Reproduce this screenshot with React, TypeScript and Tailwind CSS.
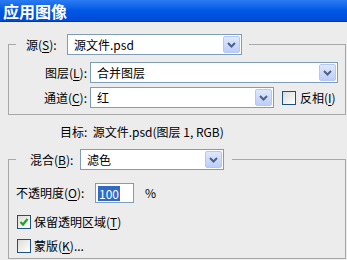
import React from 'react';

const U = ({ c }: { c: string }) => <span className="underline underline-offset-2">{c}</span>;

function Select({ value, className }: { value: string; className: string }) {
    return (
        <div className={`flex h-[21px] items-center border border-[#7f9db9] bg-white ${className}`}>
            <span className="flex-1 pl-[6px] leading-none">{value}</span>
            <div className="mr-[1px] flex h-[17px] w-[17px] items-center justify-center rounded-[2px] border border-[#b4c8f4] bg-gradient-to-b from-[#dfe8fd] to-[#bccdf7]">
                <svg width="9" height="6" viewBox="0 0 9 6">
                    <path d="M1 1 L4.5 4.5 L8 1" fill="none" stroke="#4d6185" strokeWidth="2" />
                </svg>
            </div>
        </div>
    );
}

function Check({ checked }: { checked?: boolean }) {
    return (
        <div className="flex h-[14px] w-[14px] items-center justify-center border border-[#1c5180] bg-gradient-to-br from-[#dcdcd7] to-white">
            {checked && (
                <svg width="10" height="10" viewBox="0 0 10 10">
                    <path d="M1.5 5 L4 7.5 L8.5 2" fill="none" stroke="#21a121" strokeWidth="2.2" />
                </svg>
            )}
        </div>
    );
}

export default function App() {
    return (
        <div className="relative h-[260px] w-[347px] overflow-hidden bg-[#ececec] font-['Noto_Sans_CJK_SC',sans-serif] text-[12px] text-black">
            {/* Title bar */}
            <div className="flex h-[22px] items-center border-b border-[#0036b8] bg-gradient-to-b from-[#2b7bf2] via-[#0058e6] to-[#004ad6] pl-[3px] text-[16px] font-bold leading-none text-white">
                应用图像
            </div>

            {/* Source group */}
            <fieldset className="ml-[8px] mt-[12px] h-[81px] w-[338px] border border-[#a8a8a8]">
                <legend className="ml-[7px] flex items-center pl-[10px] pr-[7px]">
                    <span className="w-[41px]">源(<U c="S" />):</span>
                    <Select value="源文件.psd" className="w-[175px]" />
                </legend>
                <div className="mt-[7px] flex items-center">
                    <span className="mr-[3px] w-[78px] text-right">图层(<U c="L" />):</span>
                    <Select value="合并图层" className="w-[248px]" />
                </div>
                <div className="mt-[4px] flex items-center">
                    <span className="mr-[3px] w-[78px] text-right">通道(<U c="C" />):</span>
                    <Select value="红" className="w-[184px]" />
                    <div className="ml-[8px] mr-[4px]">
                        <Check />
                    </div>
                    <span>反相(<U c="I" />)</span>
                </div>
            </fieldset>

            <div className="flex h-[34px] items-center pl-[60px]">目标:&nbsp;&nbsp;源文件.psd(图层 1, RGB)</div>

            {/* Blend group */}
            <fieldset className="ml-[8px] h-[110px] w-[338px] border border-[#a8a8a8]">
                <legend className="ml-[7px] flex items-center pl-[14px] pr-[8px]">
                    <span className="w-[50px]">混合(<U c="B" />):</span>
                    <Select value="滤色" className="w-[144px]" />
                </legend>
                <div className="mt-[13px] flex items-center pl-[7px]">
                    <span className="w-[79px]">不透明度(<U c="O" />):</span>
                    <div className="flex h-[20px] w-[39px] items-center border border-[#7f9db9] bg-white pl-[2px]">
                        <span className="bg-[#316ac5] px-[1px] leading-[15px] text-white">100</span>
                    </div>
                    <span className="ml-[11px]">%</span>
                </div>
                <div className="mt-[10px] flex items-center pl-[8px]">
                    <Check checked />
                    <span className="ml-[3px]">保留透明区域(<U c="T" />)</span>
                </div>
                <div className="mt-[6px] flex items-center pl-[8px]">
                    <Check />
                    <span className="ml-[3px]">蒙版(<U c="K" />)...</span>
                </div>
            </fieldset>
        </div>
    );
}
